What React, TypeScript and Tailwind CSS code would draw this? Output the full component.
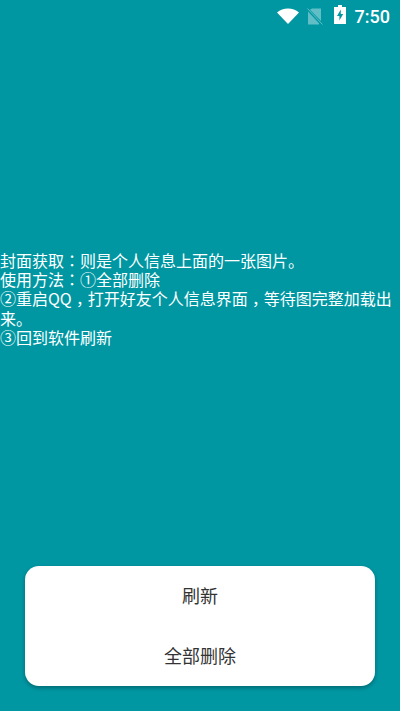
function WifiIcon() {
  return (
    <svg width="22" height="16" viewBox="0 0 22 16">
      <path d="M0 4.5C3 1.8 6.8 0.5 11 0.5S19 1.8 22 4.5L11 16Z" fill="#fff" />
    </svg>
  );
}

function NoSimIcon() {
  return (
    <svg width="16" height="17" viewBox="0 0 16 17">
      <path d="M5 0.5h9v12.5L3 1.8Z M1 3.5l11 11.8V16.5H1Z" fill="#fff" fillOpacity="0.38" />
      <path d="M0.5 0.5L15.5 16.5" stroke="#fff" strokeOpacity="0.38" strokeWidth="1" />
    </svg>
  );
}

function BatteryIcon() {
  return (
    <svg width="12" height="19" viewBox="0 0 12 19">
      <path
        fillRule="evenodd"
        d="M4 0h4v2h4v17H0V2h4Z M6.8 4.5L3 11h2.4v4.5L9.2 9H6.8Z"
        fill="#fff"
      />
    </svg>
  );
}

// punctuation sits centred in the cell in the reference
function Colon() {
  return <span className="font-['Noto_Sans_CJK_KR',sans-serif]">：</span>;
}

function Comma() {
  return <span className="relative top-[5px] font-['Noto_Sans_CJK_TC',sans-serif]">，</span>;
}

export default function App() {
  return (
    <div className="h-[711px] w-[400px] flex flex-col overflow-hidden bg-[#0097a3] font-['Noto_Sans_CJK_SC','Noto_Sans',sans-serif]">
      <div className="h-8 flex items-center justify-end pr-[10px] shrink-0">
        <WifiIcon />
        <div className="ml-[8px]">
          <NoSimIcon />
        </div>
        <div className="ml-[11px] mb-[3px]">
          <BatteryIcon />
        </div>
        <span className="ml-[9px] text-[18px] font-medium text-white font-['Roboto',sans-serif]">
          7:50
        </span>
      </div>

      <div className="flex-1 flex flex-col justify-center">
        <p className="text-[16px] leading-[19.25px] text-white">
          封面获取<Colon />则是个人信息上面的一张图片。
          <br />
          使用方法<Colon />①全部删除
          <br />
          ②重启QQ<Comma />打开好友个人信息界面<Comma />等待图完整加载出来。
          <br />
          ③回到软件刷新
        </p>
      </div>

      <div className="mx-[25px] mb-[25px] h-[120px] rounded-[14px] bg-white shadow-[0_2px_4px_rgba(0,0,0,0.3)] flex flex-col shrink-0 text-[18px] text-[#333]">
        <button className="h-[58px] flex items-center justify-center">刷新</button>
        <button className="mt-[1px] h-[60px] flex items-center justify-center">全部删除</button>
      </div>
    </div>
  );
}
